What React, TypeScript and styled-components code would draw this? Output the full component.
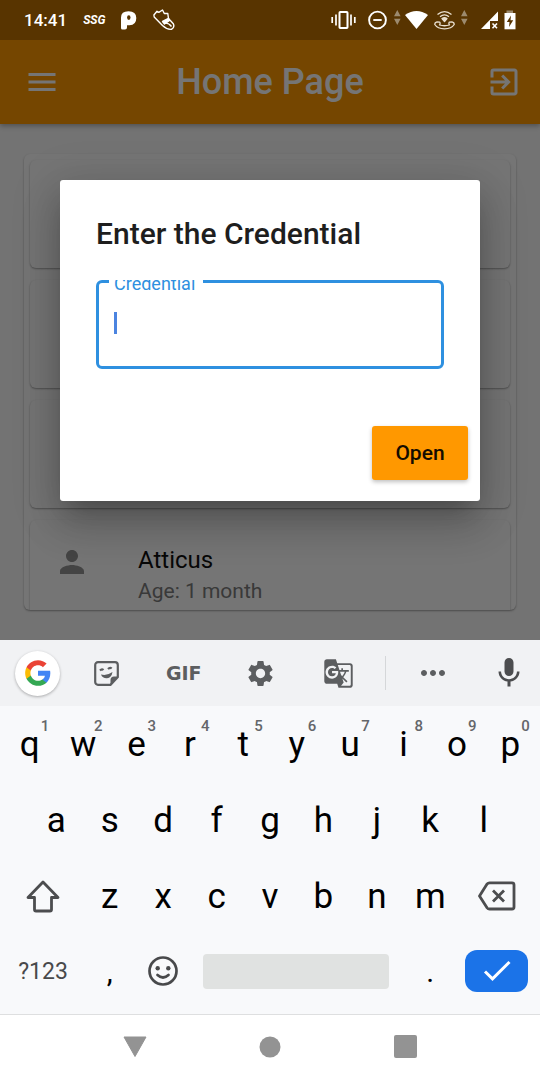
import React from "react";
import styled, { createGlobalStyle } from "styled-components";
import {
  MdExitToApp,
  MdGTranslate,
  MdMenu,
  MdMic,
  MdMoreHoriz,
  MdPerson,
  MdSettings,
} from "react-icons/md";

const GlobalStyle = createGlobalStyle`
  *, *::before, *::after { box-sizing: border-box; }
  body { margin: 0; font-family: Roboto, "Liberation Sans", sans-serif; background: #fff; }
  button { font-family: inherit; border: 0; padding: 0; background: none; color: inherit; cursor: pointer; }
  svg { display: block; flex: none; }
`;

/* ---------- screen ---------- */

const Screen = styled.div`
  display: flex;
  flex-direction: column;
  min-height: 100vh;
`;

const StatusBar = styled.div`
  display: flex;
  align-items: center;
  justify-content: space-between;
  height: 40px;
  padding: 0 24px;
  background: #583400;
  color: #fff;
`;

const StatusGroup = styled.div<{ $gap: number }>`
  display: flex;
  align-items: center;
  gap: ${(p) => p.$gap}px;
`;

const Clock = styled.time`
  font-size: 17px;
  font-weight: 500;
`;

const ScoreBadge = styled.span`
  font: italic 700 12px "Liberation Sans Narrow", Roboto, sans-serif;
`;

const AppArea = styled.div`
  position: relative;
  flex: 1;
  display: flex;
  flex-direction: column;
  overflow: hidden;
  background: #fafafa;
`;

const AppBar = styled.header`
  display: flex;
  align-items: center;
  height: 84px;
  padding: 0 18px 0 24px;
  background: #ff9800;
  color: #fff;
  box-shadow: 0 2px 5px rgba(0, 0, 0, 0.3);
`;

const PageTitle = styled.h1`
  flex: 1;
  margin: 0;
  padding-right: 6px;
  text-align: center;
  font-size: 36px;
  font-weight: 500;
`;

const Content = styled.main`
  flex: 1;
  display: flex;
  padding: 30px 24px;
`;

const ListCard = styled.ul`
  flex: 1;
  height: 456px;
  margin: 0;
  padding: 6px;
  display: flex;
  flex-direction: column;
  gap: 12px;
  list-style: none;
  overflow: hidden;
  background: #fff;
  border-radius: 6px;
  box-shadow: 0 1px 2px rgba(0, 0, 0, 0.35);
`;

const Tile = styled.li`
  display: flex;
  flex: none;
  gap: 48px;
  height: 108px;
  padding: 24px;
  border-radius: 6px;
  background: #fff;
  box-shadow: 0 1px 2px rgba(0, 0, 0, 0.35);
  color: #959595;
`;

const TileName = styled.div`
  font-size: 24px;
  line-height: 32px;
  color: #111;
`;

const TileDetail = styled.div`
  font-size: 21px;
  line-height: 30px;
  color: #7c7c7c;
`;

/* ---------- dialog ---------- */

const Scrim = styled.div`
  position: absolute;
  inset: 0;
  display: flex;
  align-items: center;
  padding: 0 60px;
  background: rgba(0, 0, 0, 0.54);
`;

const Dialog = styled.form`
  flex: 1;
  padding: 36px 12px 21px;
  background: #fff;
  border-radius: 3px;
  box-shadow: 0 16px 22px -10px rgba(0, 0, 0, 0.2), 0 24px 40px 3px rgba(0, 0, 0, 0.14),
    0 9px 46px 8px rgba(0, 0, 0, 0.12);
`;

const DialogTitle = styled.h2`
  margin: 0 24px 28px;
  font-size: 30px;
  font-weight: 500;
  line-height: 36px;
  color: #1e1e1e;
`;

const Field = styled.div`
  position: relative;
  margin: 0 24px 57px;
  overflow: hidden;
`;

const FieldLabel = styled.label`
  position: absolute;
  top: -6px;
  left: 13px;
  padding: 0 8px 0 5px;
  background: #fff;
  color: #2e90e0;
  font-size: 18px;
  line-height: 20px;
`;

const FieldBox = styled.div`
  display: flex;
  padding: 29px 15px 32px;
  border: 3px solid #2e90e0;
  border-radius: 6px;
`;

const Caret = styled.span`
  width: 3px;
  height: 22px;
  background: #4b84e0;
`;

const FieldInput = styled.input`
  flex: 1;
  min-width: 0;
  height: 22px;
  padding: 0;
  border: 0;
  outline: 0;
  background: transparent;
  font: 22px Roboto, sans-serif;
`;

const Actions = styled.div`
  display: flex;
  justify-content: flex-end;
`;

const OpenButton = styled.button`
  width: 96px;
  height: 54px;
  border-radius: 3px;
  background: #ff9800;
  color: #140c00;
  font-size: 21px;
  font-weight: 500;
  box-shadow: 0 2px 4px rgba(0, 0, 0, 0.25);
`;

/* ---------- keyboard ---------- */

const Toolbar = styled.div`
  display: grid;
  grid-template-columns: 68px repeat(4, 77fr) 17px 78fr 68px;
  height: 66px;
  background: #f1f2f4;
  color: #5c5e60;
`;

const Tool = styled.button<{ $inset?: boolean }>`
  display: flex;
  align-items: center;
  justify-content: center;
  padding-left: ${(p) => (p.$inset ? 7 : 0)}px;
`;

const GoogleDisc = styled.span`
  display: flex;
  align-items: center;
  justify-content: center;
  width: 45px;
  height: 45px;
  border-radius: 50%;
  background: #fff;
  box-shadow: 0 1px 3px rgba(0, 0, 0, 0.3);
`;

const GifMark = styled.span`
  font: 700 19px "DejaVu Sans", sans-serif;
`;

const ToolDivider = styled.span`
  width: 1px;
  height: 34px;
  align-self: center;
  justify-self: center;
  background: #d5d7d9;
`;

const Keys = styled.div`
  padding: 0 3px 6px;
  background: #f8f9fb;
  border-bottom: 1px solid #dedfe0;
`;

const KeyRow = styled.div<{ $indent?: boolean }>`
  display: flex;
  height: 76px;
  padding: 0 ${(p) => (p.$indent ? "5%" : "0")};

  &:last-child {
    height: 74px;
  }
`;

const keySizes = { letter: 35, mark: 30, symbol: 23 };

const Key = styled.button<{ $span?: number; $tone?: keyof typeof keySizes }>`
  position: relative;
  display: flex;
  align-items: center;
  justify-content: center;
  flex: ${(p) => p.$span ?? 2} 1 0;
  font-size: ${(p) => keySizes[p.$tone ?? "letter"]}px;
  color: ${(p) => (p.$tone === "symbol" ? "#48494b" : "#000")};
`;

const KeyHint = styled.span`
  position: absolute;
  top: 10px;
  left: calc(50% + 11px);
  font-size: 15px;
  line-height: 20px;
  font-weight: 500;
  color: #64666a;
`;

const SpaceBar = styled.span`
  flex: 1;
  height: 35px;
  margin: 0 15px 0 13px;
  border-radius: 4px;
  background: #e0e2e1;
`;

const EnterCap = styled.span`
  display: flex;
  align-items: center;
  justify-content: center;
  width: 63px;
  height: 42px;
  border-radius: 12px;
  background: #1b73e8;
`;

const NavBar = styled.nav`
  display: grid;
  grid-template-columns: repeat(3, 1fr);
  height: 65px;
  padding: 0 12.5% 2px;
  background: #fff;
`;

/* ---------- drawings ---------- */

const PandoraMark = () => (
  <svg width="16" height="19" viewBox="0 0 16 19">
    <path d="M0 6.500Q0 .2 7.500 .2 15.300 .2 15.300 7 15.300 14 8.500 14.300H6V16.500Q6 18.600 4 18.600H1.500Q0 18.600 0 17Z" fill="#fff" />
    <ellipse cx="7.800" cy="6.600" rx="1.700" ry="2.300" fill="#583400" />
  </svg>
);

const ShoeIcon = () => (
  <svg width="22" height="22" viewBox="0 0 22 22" fill="none" stroke="#fff" strokeWidth="1.400" strokeLinejoin="round">
    <path d="M.9 6 4 2.300 5.800 3.300 9.500 1 11.300 4.500 14.800 4.500 15.500 9.500 20.300 14.800Q22 18.500 18.500 20.300 14 20.800 9.500 16.500L1.200 8Z" />
    <path d="M9.500 12.500 15.500 9.500 16.500 11.500 11.500 15Z" fill="#fff" />
    <path d="M11 14.500Q15 13 18.500 17.500" />
  </svg>
);

const VibrateIcon = () => (
  <svg width="31" height="20" viewBox="0 0 31 20" fill="none" stroke="#fff" strokeWidth="2">
    <rect x="8.500" y="2" width="8" height="16" rx=".8" />
    <path d="M5 4.500V15.500M20 4.500V15.500M1.200 7V13M23.800 7V13" strokeWidth="1.700" />
  </svg>
);

const DoNotDisturbIcon = () => (
  <svg width="20" height="20" viewBox="0 0 20 20" fill="none" stroke="#fff" strokeWidth="1.900">
    <circle cx="9.500" cy="10" r="8.400" />
    <path d="M5.300 10H13.700" />
  </svg>
);

const TrafficIcon = () => (
  <svg width="7" height="20" viewBox="0 0 7 20" fill="#9c8a6e">
    <path d="M3.300 0 6.600 6.200H0ZM0 8.800H6.600L3.300 15Z" />
  </svg>
);

const WifiIcon = () => (
  <svg width="23" height="19" viewBox="0 0 23 19">
    <path d="M0 4Q11.500-4 23 4L11.500 18Z" fill="#fff" />
  </svg>
);

const WifiCallIcon = () => (
  <svg width="21" height="20" viewBox="0 0 21 20" fill="none" stroke="#e9dfcf" strokeWidth="1.300" strokeLinejoin="round">
    <path d="M.8 14.500Q.5 12.500 3 11.800L5.800 12.200Q6.500 14 5.500 15Q10.500 16.500 15.500 15Q14.500 14 15.200 12.200L18 11.800Q20.500 12.500 20.200 14.500 17.500 18.800 10.500 18.800 3.500 18.800 .8 14.500Z" />
    <path d="M3.500 4.500Q10.500-1.300 17.500 4.500M6 6.800Q10.500 3 15 6.800" />
    <path d="M8 8.500Q10.500 7 13 8.500L10.500 11.500Z" fill="#e9dfcf" />
  </svg>
);

const SignalIcon = () => (
  <svg width="24" height="18" viewBox="0 0 24 18">
    <path d="M7 18 24 .5V10H16V18Z" fill="#fff" />
    <path d="M18.500 12.500 23 17.200M23 12.500 18.500 17.200" stroke="#fff" strokeWidth="1.600" />
  </svg>
);

const BatteryIcon = () => (
  <svg width="12" height="20" viewBox="0 0 12 20">
    <path d="M2.500.5H9V3H2.500Z" fill="#9c8a6e" />
    <path d="M.5 3H11.500V19.300H.5Z" fill="#fff" />
    <path d="M7 5.500 2.800 12H5.500L5 17 9.200 10.300H6.500Z" fill="#583400" />
  </svg>
);

const GoogleLogo = () => (
  <svg width="28" height="28" viewBox="0 0 24 24">
    <path fill="#4285F4" d="M22.560 12.250c0-.78-.07-1.530-.2-2.250H12v4.260h5.920c-.26 1.370-1.040 2.530-2.210 3.310v2.770h3.570c2.080-1.920 3.280-4.740 3.280-8.090z" />
    <path fill="#34A853" d="M12 23c2.970 0 5.460-.98 7.280-2.660l-3.570-2.770c-.98.66-2.230 1.060-3.710 1.060-2.860 0-5.290-1.930-6.160-4.530H2.180v2.840C3.990 20.530 7.700 23 12 23z" />
    <path fill="#FBBC05" d="M5.840 14.090c-.22-.66-.35-1.360-.35-2.090s.13-1.430.35-2.090V7.070H2.180C1.430 8.550 1 10.220 1 12s.43 3.450 1.180 4.930l2.850-2.220.81-.62z" />
    <path fill="#EA4335" d="M12 5.380c1.620 0 3.060.56 4.210 1.640l3.150-3.150C17.450 2.090 14.970 1 12 1 7.700 1 3.990 3.470 2.180 7.070l3.660 2.840c.87-2.600 3.300-4.530 6.160-4.530z" />
  </svg>
);

const StickerIcon = () => (
  <svg width="25" height="25" viewBox="0 0 25 25" fill="none" stroke="#5c5e60" strokeWidth="2.200">
    <path d="M4 1.200H21A2.800 2.800 0 0 1 23.800 4V16L16.500 23.800H4A2.800 2.800 0 0 1 1.200 21V4A2.800 2.800 0 0 1 4 1.200Z" />
    <path d="M24 15.500H20Q16.500 15.500 16.500 19V24Z" fill="#5c5e60" stroke="none" />
    <path d="M7 13.500Q13 15 18.500 11 17.500 17 13 17.300 8.500 17.500 7 13.500Z" fill="#5c5e60" stroke="none" />
    <path d="M6 9.500Q7.800 7.500 9.500 9M14 8Q16 6 17.700 7.500" />
  </svg>
);

const ShiftIcon = () => (
  <svg width="36" height="34" viewBox="0 0 36 34" fill="none" stroke="#4c4d4f" strokeWidth="2.800" strokeLinejoin="round">
    <path d="M18 3 33 18.500H26.500V30.500Q26.500 32 25 32H11Q9.500 32 9.500 30.500V18.500H3Z" />
  </svg>
);

const BackspaceIcon = () => (
  <svg width="38" height="30" viewBox="0 0 38 30" fill="none" stroke="#4c4d4f" strokeWidth="2.800" strokeLinejoin="round">
    <path d="M11.500 1.800H34Q36 1.800 36 3.800V26Q36 28 34 28H11.500Q10 28 9.200 27L1.500 15 9.200 2.800Q10 1.800 11.500 1.800Z" />
    <path d="M15 9.500 26 20.500M26 9.500 15 20.500" />
  </svg>
);

const EmojiIcon = () => (
  <svg width="32" height="32" viewBox="-16 -16 32 32" fill="none" stroke="#48494b" strokeWidth="2.700">
    <circle r="13.500" />
    <circle cx="-5.300" cy="-2.700" r="2.200" fill="#48494b" stroke="none" />
    <circle cx="5.300" cy="-2.700" r="2.200" fill="#48494b" stroke="none" />
    <path d="M-5.500 4Q0 9 5.500 4" strokeLinecap="round" />
  </svg>
);

const CheckIcon = () => (
  <svg width="28" height="22" viewBox="0 0 28 22" fill="none" stroke="#fff" strokeWidth="3">
    <path d="M2 11.500 9.500 18.800 26.500 2" />
  </svg>
);

const BackIcon = () => (
  <svg width="24" height="22" viewBox="0 0 24 22">
    <path d="M1 1H23L12 20.500Z" fill="#939393" stroke="#939393" strokeLinejoin="round" />
  </svg>
);

const HomeIcon = () => (
  <svg width="22" height="22" viewBox="0 0 22 22">
    <circle cx="11" cy="11" r="10.500" fill="#939393" />
  </svg>
);

const RecentsIcon = () => (
  <svg width="23" height="23" viewBox="0 0 23 23">
    <rect width="23" height="23" rx="2" fill="#939393" />
  </svg>
);

const topRow = ["q", "w", "e", "r", "t", "y", "u", "i", "o", "p"];
const homeRow = ["a", "s", "d", "f", "g", "h", "j", "k", "l"];
const bottomRow = ["z", "x", "c", "v", "b", "n", "m"];

export default function App() {
  return (
    <Screen>
      <GlobalStyle />
      <StatusBar>
        <StatusGroup $gap={16}>
          <Clock>14:41</Clock>
          <ScoreBadge>SSG</ScoreBadge>
          <PandoraMark />
          <ShoeIcon />
        </StatusGroup>
        <StatusGroup $gap={6}>
          <VibrateIcon />
          <DoNotDisturbIcon />
          <StatusGroup $gap={4}>
            <TrafficIcon />
            <WifiIcon />
          </StatusGroup>
          <WifiCallIcon />
          <TrafficIcon />
          <SignalIcon />
          <BatteryIcon />
        </StatusGroup>
      </StatusBar>

      <AppArea>
        <AppBar>
          <button type="button" aria-label="Menu">
            <MdMenu size={36} />
          </button>
          <PageTitle>Home Page</PageTitle>
          <button type="button" aria-label="Log out">
            <MdExitToApp size={36} />
          </button>
        </AppBar>
        <Content>
          <ListCard>
            <Tile />
            <Tile />
            <Tile />
            <Tile>
              <MdPerson size={36} />
              <div>
                <TileName>Atticus</TileName>
                <TileDetail>Age: 1 month</TileDetail>
              </div>
            </Tile>
          </ListCard>
        </Content>

        <Scrim>
          <Dialog role="dialog" aria-labelledby="dialog-title" onSubmit={(e) => e.preventDefault()}>
            <DialogTitle id="dialog-title">Enter the Credential</DialogTitle>
            <Field>
              <FieldBox>
                <Caret />
                <FieldInput id="credential" type="text" />
              </FieldBox>
              <FieldLabel htmlFor="credential">Credential</FieldLabel>
            </Field>
            <Actions>
              <OpenButton type="submit">Open</OpenButton>
            </Actions>
          </Dialog>
        </Scrim>
      </AppArea>

      <Toolbar>
        <Tool $inset aria-label="Google search">
          <GoogleDisc>
            <GoogleLogo />
          </GoogleDisc>
        </Tool>
        <Tool aria-label="Stickers">
          <StickerIcon />
        </Tool>
        <Tool>
          <GifMark>GIF</GifMark>
        </Tool>
        <Tool aria-label="Settings">
          <MdSettings size={31} />
        </Tool>
        <Tool aria-label="Translate">
          <MdGTranslate size={31} />
        </Tool>
        <ToolDivider />
        <Tool aria-label="More">
          <MdMoreHoriz size={36} />
        </Tool>
        <Tool $inset aria-label="Voice input">
          <MdMic size={36} color="#4c4d4f" />
        </Tool>
      </Toolbar>

      <Keys>
        <KeyRow>
          {topRow.map((letter, i) => (
            <Key key={letter}>
              {letter}
              <KeyHint>{(i + 1) % 10}</KeyHint>
            </Key>
          ))}
        </KeyRow>
        <KeyRow $indent>
          {homeRow.map((letter) => (
            <Key key={letter}>{letter}</Key>
          ))}
        </KeyRow>
        <KeyRow>
          <Key $span={3} aria-label="Shift">
            <ShiftIcon />
          </Key>
          {bottomRow.map((letter) => (
            <Key key={letter}>{letter}</Key>
          ))}
          <Key $span={3} aria-label="Backspace">
            <BackspaceIcon />
          </Key>
        </KeyRow>
        <KeyRow>
          <Key $span={3} $tone="symbol">
            ?123
          </Key>
          <Key $tone="mark">,</Key>
          <Key aria-label="Emoji">
            <EmojiIcon />
          </Key>
          <Key $span={8} aria-label="Space">
            <SpaceBar />
          </Key>
          <Key $tone="mark">.</Key>
          <Key $span={3} aria-label="Done">
            <EnterCap>
              <CheckIcon />
            </EnterCap>
          </Key>
        </KeyRow>
      </Keys>

      <NavBar aria-label="System navigation">
        <Tool aria-label="Back">
          <BackIcon />
        </Tool>
        <Tool aria-label="Home">
          <HomeIcon />
        </Tool>
        <Tool aria-label="Recent apps">
          <RecentsIcon />
        </Tool>
      </NavBar>
    </Screen>
  );
}
